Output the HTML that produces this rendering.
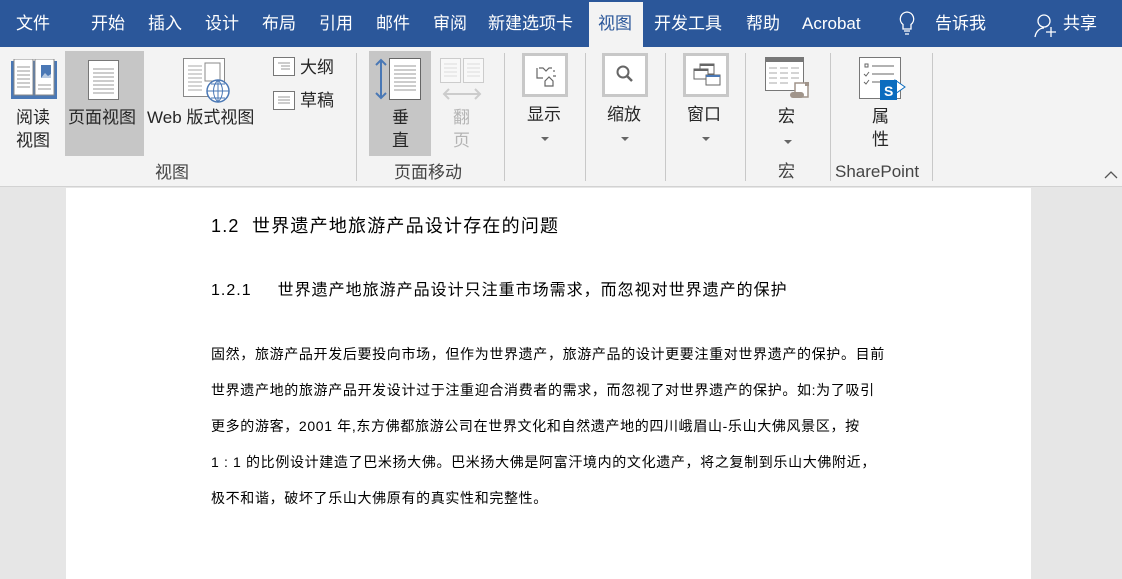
<!DOCTYPE html>
<html><head><meta charset="utf-8"><style>
*{margin:0;padding:0;box-sizing:border-box}
body{width:1122px;height:579px;overflow:hidden;position:relative;font-family:"Liberation Sans","Noto Sans CJK SC",sans-serif;background:#e6e6e6}
.a{position:absolute;white-space:nowrap}
#top{position:absolute;left:0;top:0;width:1122px;height:47px;background:#2b579a}
.tab{position:absolute;top:13px;color:#fff;font-size:17px;line-height:22px}
#rib{position:absolute;left:0;top:47px;width:1122px;height:140px;background:#f3f3f3;border-bottom:1px solid #d2d2d2}
.t{position:absolute;font-size:17px;color:#262626;line-height:22px;white-space:nowrap}
.g{position:absolute;font-size:17px;color:#444;line-height:22px;white-space:nowrap}
.sep{position:absolute;top:6px;width:1px;height:128px;background:#c8c8c8}
.hl{position:absolute;background:#c6c6c6}
.box{position:absolute;top:6px;width:46px;height:44px;border:3px solid #c8c8c8;background:#fff}
.dd{position:absolute;width:0;height:0;border-left:4px solid transparent;border-right:4px solid transparent;border-top:4px solid #666}
#page{position:absolute;left:66px;top:188px;width:965px;height:391px;background:#fff}
.p{position:absolute;left:145px;font-size:14px;letter-spacing:0.65px;color:#000;white-space:nowrap;line-height:20px}
</style></head><body>
<div id="top">
<div class="a" style="left:589px;top:2px;width:54px;height:45px;background:#f3f3f3"></div>
<span class="tab" style="left:16px">文件</span>
<span class="tab" style="left:91px">开始</span>
<span class="tab" style="left:148px">插入</span>
<span class="tab" style="left:205px">设计</span>
<span class="tab" style="left:262px">布局</span>
<span class="tab" style="left:319px">引用</span>
<span class="tab" style="left:376px">邮件</span>
<span class="tab" style="left:433px">审阅</span>
<span class="tab" style="left:488px">新建选项卡</span>
<span class="tab" style="left:598px;color:#2b579a">视图</span>
<span class="tab" style="left:654px">开发工具</span>
<span class="tab" style="left:746px">帮助</span>
<span class="tab" style="left:802px">Acrobat</span>
<svg class="a" style="left:898px;top:10px" width="18" height="26" viewBox="0 0 18 26"><path d="M9 2a7 7 0 0 0-4 12.5V19h8v-4.5A7 7 0 0 0 9 2z M6 21h6 M7 24h4" fill="none" stroke="#fff" stroke-width="1.3"/></svg>
<span class="tab" style="left:935px">告诉我</span>
<svg class="a" style="left:1033px;top:13px" width="24" height="26" viewBox="0 0 24 26"><circle cx="11" cy="8" r="6" fill="none" stroke="#fff" stroke-width="1.3"/><path d="M2 24c1-6 5-9 9-9 M13 19h10 M18 14v10" fill="none" stroke="#fff" stroke-width="1.3"/></svg>
<span class="tab" style="left:1063px">共享</span>
</div>
<div id="rib">
<div class="hl" style="left:65px;top:4px;width:79px;height:105px"></div>
<div class="hl" style="left:369px;top:4px;width:62px;height:105px"></div>
<svg class="a" style="left:11px;top:12px" width="46" height="40" viewBox="0 0 46 40"><rect x="0" y="2" width="46" height="38" fill="#4a78b5"/><rect x="3" y="0" width="19" height="36" fill="#fff" stroke="#888"/><rect x="24" y="0" width="19" height="36" fill="#fff" stroke="#888"/><g stroke="#999"><path d="M6 8h13M6 12h13M6 16h13M6 20h13M6 24h13M6 28h13M27 26h13M27 30h13"/></g><rect x="30" y="6" width="10" height="13" fill="#4a78b5"/><path d="M30 19l4-5 3 3 3-2v4z" fill="#fff" opacity=".6"/></svg>
<svg class="a" style="left:88px;top:13px" width="31" height="40" viewBox="0 0 31 40"><rect x=".5" y=".5" width="30" height="39" fill="#fff" stroke="#777"/><g stroke="#999"><path d="M5 9h21M5 13h21M5 17h21M5 21h21M5 25h21M5 29h21M5 33h21"/></g></svg>
<svg class="a" style="left:183px;top:11px" width="48" height="46" viewBox="0 0 48 46"><rect x=".5" y=".5" width="41" height="38" fill="#fff" stroke="#888"/><rect x="22" y="5" width="15" height="18" fill="#fff" stroke="#888"/><g stroke="#aaa"><path d="M5 8h14M5 12h14M5 16h14M5 20h14M5 24h14M5 28h14M5 32h14"/></g><circle cx="35" cy="33" r="11" fill="#fff" stroke="#4a78b5" stroke-width="1.5"/><path d="M24 33h22M35 22v22M28 26h14M28 40h14M35 22c-6 6-6 16 0 22M35 22c6 6 6 16 0 22" fill="none" stroke="#4a78b5"/></svg>
<svg class="a" style="left:273px;top:10px" width="22" height="19" viewBox="0 0 22 19"><rect x=".5" y=".5" width="21" height="18" fill="#fff" stroke="#777"/><path d="M5 6h12M8 9h9M8 12h9" stroke="#999"/></svg>
<span class="t" style="left:300px;top:10px">大纲</span>
<svg class="a" style="left:273px;top:44px" width="22" height="19" viewBox="0 0 22 19"><rect x=".5" y=".5" width="21" height="18" fill="#fff" stroke="#777"/><path d="M5 6h12M5 9h12M5 12h12" stroke="#999"/></svg>
<span class="t" style="left:300px;top:43px">草稿</span>
<span class="t" style="left:16px;top:60px">阅读</span>
<span class="t" style="left:16px;top:83px">视图</span>
<span class="t" style="left:68px;top:60px">页面视图</span>
<span class="t" style="left:147px;top:60px">Web 版式视图</span>
<span class="g" style="left:155px;top:115px">视图</span>
<div class="sep" style="left:356px"></div>
<svg class="a" style="left:374px;top:11px" width="48" height="42" viewBox="0 0 48 42"><path d="M7 2v38M2 7l5-5 5 5M2 35l5 5 5-5" fill="none" stroke="#4a78b5" stroke-width="2"/><rect x="15.5" y=".5" width="31" height="41" fill="#fff" stroke="#666"/><g stroke="#999"><path d="M20 8h22M20 12h22M20 16h22M20 20h22M20 24h22M20 28h22M20 32h22"/></g></svg>
<svg class="a" style="left:440px;top:11px" width="44" height="44" viewBox="0 0 44 44"><rect x=".5" y=".5" width="20" height="24" fill="#f8f8f8" stroke="#ccc"/><rect x="23.5" y=".5" width="20" height="24" fill="#f8f8f8" stroke="#ccc"/><g stroke="#ddd"><path d="M4 6h13M4 10h13M4 14h13M4 18h13M27 6h13M27 10h13M27 14h13M27 18h13"/></g><path d="M4 36h36M9 31l-5 5 5 5M35 31l5 5-5 5" fill="none" stroke="#ccc" stroke-width="2"/></svg>
<span class="t" style="left:392px;top:60px">垂</span><span class="t" style="left:392px;top:83px">直</span>
<span class="t" style="left:453px;top:60px;color:#b4b4b4">翻</span><span class="t" style="left:453px;top:83px;color:#b4b4b4">页</span>
<span class="g" style="left:394px;top:115px">页面移动</span>
<div class="sep" style="left:504px"></div>
<div class="box" style="left:522px"><svg width="40" height="38" viewBox="0 0 40 38"><path d="M12 12v10h6M14 12h4l3 3 3-3h3M29 14v2M20 25l4-4 4 4v5h-8z M28 20h3" fill="none" stroke="#666" stroke-width="1.2"/></svg></div>
<span class="t" style="left:527px;top:57px">显示</span><div class="dd" style="left:541px;top:90px"></div>
<div class="sep" style="left:585px"></div>
<div class="box" style="left:602px"><svg width="40" height="38" viewBox="0 0 40 38"><circle cx="18" cy="16" r="5.5" fill="none" stroke="#666" stroke-width="2"/><path d="M22 20l5 5" stroke="#666" stroke-width="2.5"/></svg></div>
<span class="t" style="left:607px;top:57px">缩放</span><div class="dd" style="left:621px;top:90px"></div>
<div class="sep" style="left:665px"></div>
<div class="box" style="left:683px"><svg width="40" height="38" viewBox="0 0 40 38"><rect x="14" y="8" width="14" height="10" fill="#fff" stroke="#666"/><rect x="14" y="8" width="14" height="2" fill="#666"/><rect x="8" y="13" width="14" height="10" fill="#fff" stroke="#666"/><rect x="8" y="13" width="14" height="2" fill="#666"/><rect x="20" y="19" width="14" height="10" fill="#fff" stroke="#666"/><rect x="20" y="19" width="14" height="2" fill="#4a78b5"/></svg></div>
<span class="t" style="left:687px;top:57px">窗口</span><div class="dd" style="left:702px;top:90px"></div>
<div class="sep" style="left:745px"></div>
<svg class="a" style="left:765px;top:10px" width="48" height="42" viewBox="0 0 48 42"><rect x=".5" y=".5" width="38" height="33" fill="#fff" stroke="#777"/><rect x="0" y="0" width="39" height="5" fill="#777"/><g stroke="#aaa"><path d="M4 11h8M15 11h8M26 11h8M4 16h8M15 16h8M26 16h8M4 21h8M15 21h8M26 21h8M4 26h8M15 26h8"/></g><path d="M30 26h13v14H30z" fill="#fff" stroke="#a0948a" stroke-width="1.5"/><rect x="25" y="35" width="14" height="6" rx="3" fill="#a0948a"/><rect x="40" y="25" width="4" height="4" fill="#a0948a"/></svg>
<span class="t" style="left:778px;top:59px">宏</span><div class="dd" style="left:784px;top:93px"></div>
<span class="g" style="left:778px;top:114px">宏</span>
<div class="sep" style="left:830px"></div>
<svg class="a" style="left:859px;top:10px" width="50" height="44" viewBox="0 0 50 44"><rect x=".5" y=".5" width="41" height="41" fill="#fff" stroke="#777"/><rect x="6" y="7" width="3" height="3" fill="none" stroke="#666"/><path d="M13 9h22M5 17l2 2 3-4M13 17h22M5 25l2 2 3-4M13 25h22" fill="none" stroke="#666"/><path d="M36 23l10 7-10 7z" fill="#fff" stroke="#0a6cbf"/><rect x="21" y="23" width="17" height="20" fill="#0a6cbf"/><text x="25" y="39" font-size="14" font-weight="bold" fill="#fff" font-family="Liberation Sans">S</text></svg>
<span class="t" style="left:872px;top:59px">属</span><span class="t" style="left:872px;top:82px">性</span>
<span class="g" style="left:835px;top:114px">SharePoint</span>
<div class="sep" style="left:932px"></div>
<svg class="a" style="left:1104px;top:123px" width="14" height="10" viewBox="0 0 14 10"><path d="M1 8l6-6 6 6" fill="none" stroke="#555" stroke-width="1.3"/></svg>
</div>
<div id="page">
<div class="p" style="top:25px;font-size:18px;letter-spacing:1.2px;line-height:26px">1.2&nbsp; 世界遗产地旅游产品设计存在的问题</div>
<div class="p" style="top:91px;font-size:16px;letter-spacing:1px;line-height:24px">1.2.1<span style="display:inline-block;width:26px"></span>世界遗产地旅游产品设计只注重市场需求，而忽视对世界遗产的保护</div>
<div class="p" style="top:156px">固然，旅游产品开发后要投向市场，但作为世界遗产，旅游产品的设计更要注重对世界遗产的保护。目前</div>
<div class="p" style="top:192px">世界遗产地的旅游产品开发设计过于注重迎合消费者的需求，而忽视了对世界遗产的保护。如:为了吸引</div>
<div class="p" style="top:228px">更多的游客，2001 年,东方佛都旅游公司在世界文化和自然遗产地的四川峨眉山-乐山大佛风景区，按</div>
<div class="p" style="top:264px">1 : 1 的比例设计建造了巴米扬大佛。巴米扬大佛是阿富汗境内的文化遗产，将之复制到乐山大佛附近，</div>
<div class="p" style="top:300px">极不和谐，破坏了乐山大佛原有的真实性和完整性。</div>
</div>
</body></html>
